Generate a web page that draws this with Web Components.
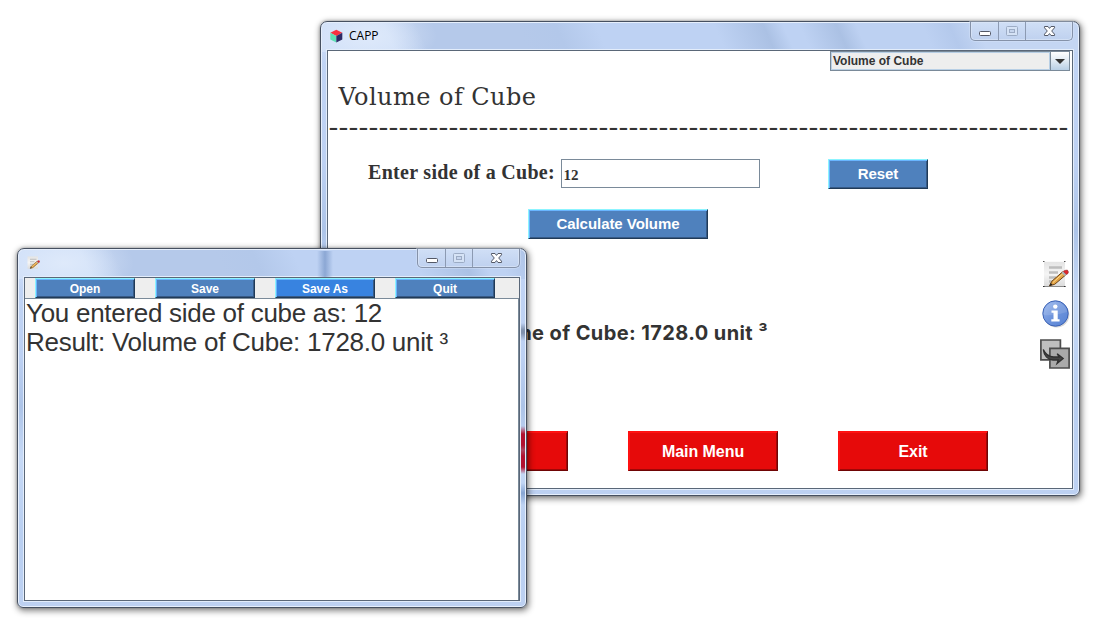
<!DOCTYPE html>
<html lang="en">
<head>
<meta charset="utf-8">
<title>CAPP</title>
<style>
html,body{margin:0;height:100%;background:#fff;overflow:hidden}
body{position:relative;font-family:"Liberation Sans",Arial,sans-serif;color:#333}
#main{position:absolute;left:320px;top:21px;width:760px;height:475px}
#note{position:absolute;left:17px;top:248px;width:510px;height:360px}
</style>
</head>
<body>
<glass-window id="main" caption="CAPP"><cube-icon slot="icon"></cube-icon><cube-form></cube-form></glass-window>
<glass-window id="note" caption="" over><note-icon slot="icon" size="13"></note-icon><note-pad></note-pad></glass-window>
<script>
function define(name, html, setup){
  customElements.define(name, class extends HTMLElement{
    constructor(){super();this.attachShadow({mode:'open'}).innerHTML=html;}
    connectedCallback(){if(setup)setup.call(this,this.shadowRoot);}
  });
}

/* Single line of text whose tracking is spread to a given width. */
define('fit-text',`<style>:host{display:block;white-space:pre}span{display:inline-block}</style><span><slot></slot></span>`,function(r){
  const s=r.querySelector('span'),w=+this.getAttribute('w');
  if(!w)return;
  const n=this.textContent.length,cur=s.getBoundingClientRect().width;
  s.style.letterSpacing=((w-cur)/n)+'px';
});

define('cube-icon',`<style>:host{display:block;width:13px;height:14px}svg{display:block}</style>
<svg width="13" height="14" viewBox="0 0 13 14"><path d="M.3 3.7 6.3.7l6 3-6 3.4z" fill="#f8323f"/><path d="M.3 3.7l6 3.4v6.4l-6-3z" fill="#5fe0b4"/><path d="M12.300 3.7l-6 3.400v6.400l6-3z" fill="#2e2a66"/></svg>`);

define('note-icon',`<style>:host{display:block}svg{display:block}</style>
<svg viewBox="0 0 26 27"><defs><linearGradient id="p" x1="0" y1="0" x2="0" y2="1"><stop offset="0" stop-color="#e4e4e4"/><stop offset=".5" stop-color="#f5f5f5"/><stop offset="1" stop-color="#dcdcdc"/></linearGradient></defs>
<path d="M1 .8h21v24.500H1z" fill="url(#p)"/><path class="c" d="M0 .5h1.500M21 .5h1.500" stroke="#555"/><path class="c" d="M.5 25.500h22" stroke="#8a8a8a"/><path class="c" d="M0 25.500h1.500M21 25.500h1.500" stroke="#333"/>
<path d="M6 6.500h13M6 11.500h9M6 16.500h7M6 20.500h4" stroke="#bdbdbd" stroke-width="2.400"/>
<path d="M6.500 24.800l2.300-4.500L19.600 10.800l3.100 3.200-11 9.300z" fill="#e3a548" stroke="#6b4214" stroke-width="1"/><path d="M10 21.500 20.500 12" stroke="#ffd98b"/><path d="M6.300 25l1.500-3 1.700 1.800z" fill="#222"/>
<path d="M18.600 11.700l1.500-1.400 3.200 3.200-1.500 1.400z" fill="#aeb4b8"/><path d="M20.400 10.300l1.500-.9 2.500-.3 1 1.800-.4 1.500-1.600 1.200z" fill="#e2262d" stroke="#8c2020" stroke-width=".6"/></svg>`,function(r){
  const s=+this.getAttribute('size')||26,v=r.querySelector('svg');v.setAttribute('width',s);v.setAttribute('height',s*27/26);
  if(s<20)r.querySelectorAll('.c').forEach(e=>e.remove());
});

define('info-icon',`<style>:host{display:block}svg{display:block}</style>
<svg width="28" height="28" viewBox="0 0 28 28"><defs><linearGradient id="g" x1="0" y1="0" x2="1" y2="1"><stop offset="0" stop-color="#9ab8ee"/><stop offset=".5" stop-color="#6e94dc"/><stop offset="1" stop-color="#5582d4"/></linearGradient></defs>
<circle cx="14.600" cy="14.800" r="12.800" fill="#bbb" opacity=".6"/><circle cx="13.500" cy="13.500" r="12.700" fill="url(#g)" stroke="#3c62b4" stroke-width="1"/><path d="M1.800 15a11.800 11.800 0 0 1 23.400-3q-12 4-23.400 3z" fill="#fff" opacity=".12"/>
<circle cx="13.300" cy="6.600" r="2.200" fill="#fff"/><path d="M9.500 10.500h6.200v8.700h1.900v2.300H9.300v-2.300h2.200v-6.400h-2z" fill="#fff"/></svg>`);

define('swap-icon',`<style>:host{display:block}svg{display:block}</style>
<svg width="30" height="30" viewBox="0 0 30 30"><path d="M.9 1h19.500v19.800H.9z" fill="#bfbfbf" stroke="#4d4d4d" stroke-width="1.700"/><path d="M9.900 9.300h19.200V29H9.900z" fill="#aaa" stroke="#4d4d4d" stroke-width="1.700"/>
<path d="M3.300 10.500c2 4.300 5.500 7.300 10.200 7.500h5.500l-1.800-3.300 6 4.900-6.200 5 1.300-3.600h-5.300C7.500 20.800 4 16.500 3.300 10.500z" fill="#444" stroke="#303030" stroke-width="1.300"/></svg>`);

define('window-controls',`<style>
:host{display:flex;box-sizing:border-box;width:103px;height:19px;border:1px solid #8592a9;border-top:0;border-radius:0 0 5px 5px;background:linear-gradient(#d0dff6,#bfd1ef);box-shadow:inset 0 0 0 1px #dce7f8aa,0 0 0 1px #dae6f966;overflow:hidden}
svg{display:block}</style>
<svg width="101" height="18" viewBox="0 0 101 18"><path d="M27.500 0v18M54.500 0v18" stroke="#8c9ab2"/><rect x="8.500" y="9.500" width="11" height="4" rx="1" fill="#fff" stroke="#535866"/>
<g opacity=".8"><rect x="35.500" y="4.500" width="11" height="9" rx="1" fill="#d9e5f7" stroke="#91a0b9"/><rect x="38.500" y="7.500" width="5" height="3" fill="#c6d5ed" stroke="#91a0b9"/></g>
<path d="M73.500 4.500h3.500l1.500 1.900 1.500-1.900h3.500v1.300L80.700 9l2.800 3.200v1.300H80l-1.500-1.900-1.500 1.900h-3.500v-1.300L76.300 9l-2.800-3.200z" fill="#fff" stroke="#535866"/></svg>`);

define('glass-window',`<style>
:host{display:flex;flex-direction:column;box-sizing:border-box;border:1px solid #465060;border-radius:7px 7px 6px 6px;padding:0 6px 6px;
 background:
 radial-gradient(ellipse 70px 34px at 46px 14px,#e2ecfbcc,transparent),
 linear-gradient(66deg,#cfdff8 0 68px,#b5c9ea 98px 190px,#b3c8ea 225px,#bed2f3 262px 370px,#abc1e4 415px,#bed2f3 433px 448px,#abc1e4 482px,#bdd1f2 500px 560px,#b4c9ec 585px,#c4d6f3 610px) 0 0/100% 30px no-repeat,
 linear-gradient(#c2d5f5,#bdd1f3 30%,#adc4e8 44%,#c6d9f6 58%,#b9cff1 80%,#bdd1f2);
 box-shadow:inset 0 0 0 1px #e6effc,1px 2px 6px 1px #0007,0 0 3px #0004}
header{display:flex;height:28px;flex:none;align-items:flex-start}
.icon{padding:7px 0 0 3px;width:16px;box-sizing:content-box}
:host([over]) header{position:relative}
:host([over]) header:before{content:"";position:absolute;left:293px;top:2px;width:16px;height:26px;background:linear-gradient(90deg,transparent,#7594c6b0,transparent)}
fit-text{flex:1;padding-left:3px;font:12px/28px "Open Sans","Noto Sans",sans-serif;color:#000;height:28px;overflow:hidden}
main{flex:1;min-height:0;border:1px solid #5a6778;background:#fff;box-shadow:0 0 0 1px #e3edfb;display:flex;flex-direction:column;overflow:hidden}
.smear{display:none}
:host([over]) .smear{display:block;position:absolute;right:1px;top:50px;bottom:8px;width:4px;background:linear-gradient(transparent 24px,#61718baa 31px,#61718baa 34px,transparent 42px 127px,#b01130 135px 146px,#aa4560 151px,#b01130 157px 168px,transparent 175px 184px,#7294c8bb 194px,transparent 206px)}
</style><header><div class="icon"><slot name="icon"></slot></div><fit-text></fit-text><window-controls></window-controls></header><main><slot></slot></main><div class="smear"></div>`,function(r){
  const t=r.querySelector('fit-text');t.textContent=this.getAttribute('caption');
});

define('bevel-button',`<style>
:host{display:flex;box-sizing:border-box;align-items:center;justify-content:center;flex:none;border:1px solid;border-color:#8cf4ff #203a57 #203a57 #8cf4ff;background:#4f81bd;color:#fff;font:bold 15px/17px "Liberation Sans",Arial,sans-serif;width:100px;height:30px;padding-bottom:2px;box-shadow:inset 1px 1px #69b5ff,inset -1px -1px #375a86}
:host([kind=red]){width:150px;height:40px;padding:0;background:#e60a0a;border-color:#ff1010 #6f0505 #6f0505 #ff1010;box-shadow:inset 1px 1px #ff1212,inset -1px -1px #a00707;font-size:16px}
:host([kind=small]),:host([kind=hot]){height:20px;font-size:12px;line-height:14px;padding:2px 0 0}
:host([kind=hot]){background:#3883e0}
:host([wide]){width:180px}
fit-text{letter-spacing:-.05px}
</style><fit-text><slot></slot></fit-text>`);

define('combo-box',`<style>
:host{display:flex;box-sizing:border-box;width:240px;height:20px;border:1px solid #7a8a99;background:#eee;font:bold 12px/18px "Liberation Sans",Arial,sans-serif;color:#333}
.v{flex:1;padding-left:2px;box-shadow:inset 0 0 0 1px #b8cfe5}
.a{width:18px;border-left:1px solid #7a8a99;background:linear-gradient(#fff,#dfe9f3 50%,#b8cfe5);display:flex;align-items:center;justify-content:center}
fit-text{height:18px}</style>
<div class="v"><fit-text w="89"></fit-text></div><div class="a"><svg width="10" height="5"><path d="M0 0h10L5 5z" fill="#333"/></svg></div>`,function(r){
  r.querySelector('fit-text').textContent=this.getAttribute('value');
});

define('text-field',`<style>:host{display:block;box-sizing:border-box;width:199px;height:29px;border:1px solid #7a8a99;background:#fff;padding-left:1.500px;font:bold 15px/31px "Liberation Serif",serif;color:#333;overflow:hidden}</style><slot></slot>`);

define('cube-form',`<style>
:host{display:flex;flex-direction:column;height:437px;color:#333}
combo-box{align-self:flex-end;margin-right:2px;flex:none}
.title{margin:11px 0 0 10.500px;font:24px/30px "DejaVu Serif",serif;height:30px;flex:none}
.rule{margin-top:-1px;padding-left:.7px;font:28px/30px "Liberation Serif",serif;height:30px;flex:none}
.row{display:flex;margin-top:18px;padding-left:40px;height:30px;flex:none}
.label{font:bold 20px/26px "Liberation Serif",serif;width:193px}
.row bevel-button{margin-left:68px}
.calc{margin:20px 0 0 200px}
.mid{display:flex;justify-content:space-between;height:192px;flex:none}
.result{margin:79px 0 0 140px;font:bold 20px/30px Inter,"Open Sans",sans-serif}
.tools{display:flex;flex-direction:column;width:32px;padding-top:22px}
note-icon{margin:0 0 12px 3px}info-icon{margin:0 0 11px 2px}
.foot{display:flex;gap:60px;padding-left:90px}
</style>
<combo-box value="Volume of Cube"></combo-box>
<fit-text class="title" w="198">Volume of Cube</fit-text>
<fit-text class="rule" w="740">--------------------------------------------------------------------------</fit-text>
<div class="row"><fit-text class="label" w="187">Enter side of a Cube:</fit-text><text-field>12</text-field><bevel-button>Reset</bevel-button></div>
<bevel-button class="calc" wide>Calculate Volume</bevel-button>
<div class="mid"><fit-text class="result" w="300">Volume of Cube: 1728.0 unit ³</fit-text><div class="tools"><note-icon size="26"></note-icon><info-icon></info-icon><swap-icon></swap-icon></div></div>
<div class="foot"><bevel-button kind="red"></bevel-button><bevel-button kind="red">Main Menu</bevel-button><bevel-button kind="red">Exit</bevel-button></div>`);

define('note-pad',`<style>
:host{display:flex;flex-direction:column;flex:1;color:#333}
nav{display:flex;gap:20px;padding-left:10px;height:20px;background:#eee;flex:none}
section{flex:1;border:1px solid #7a8a99;border-left:0;border-bottom:0;font:26px/29px "Liberation Sans",Arial,sans-serif;padding-left:1px}
</style><nav><bevel-button kind="small">Open</bevel-button><bevel-button kind="small">Save</bevel-button><bevel-button kind="hot">Save As</bevel-button><bevel-button kind="small">Quit</bevel-button></nav>
<section><fit-text w="356">You entered side of cube as: 12</fit-text><fit-text w="422">Result: Volume of Cube: 1728.0 unit ³</fit-text></section>`);
</script>
</body>
</html>
